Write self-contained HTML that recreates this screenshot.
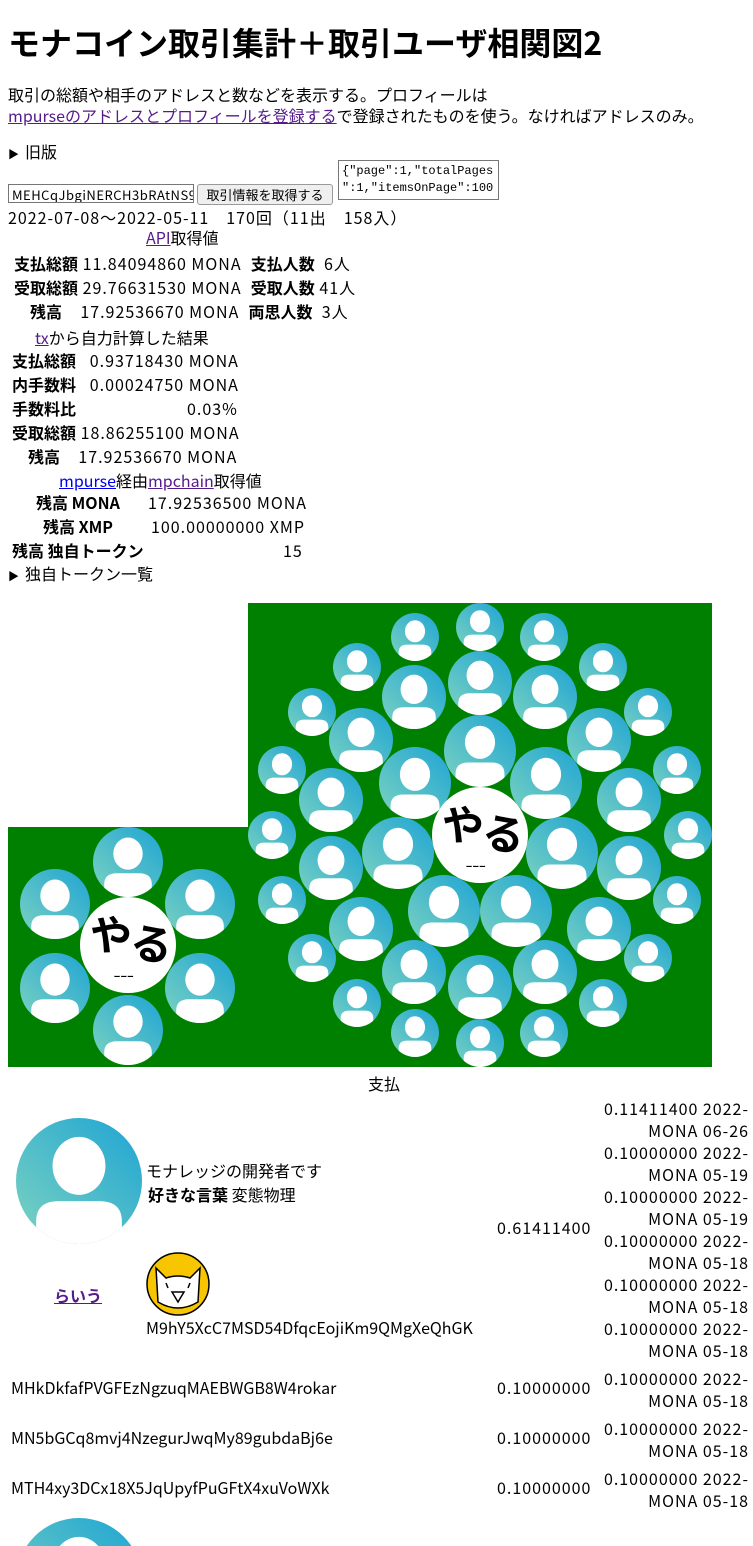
<!DOCTYPE html>
<html><head><meta charset="utf-8"><style>
body{margin:0;width:753px;height:1546px;overflow:hidden;background:#fff;font-family:"Noto Sans CJK JP","Liberation Sans",sans-serif;font-size:16px;color:#000;position:relative}
.a{position:absolute;white-space:nowrap;line-height:20px}
.n{letter-spacing:1px}
b{font-weight:bold;letter-spacing:0}
a{color:#551a8b}
.r{text-align:right}
.t{font-size:11px;display:inline-block;width:17px}
</style></head><body>
<svg width="0" height="0" style="position:absolute"><defs>
<linearGradient id="g" x1="0" y1="1" x2="1" y2="0"><stop offset="0" stop-color="#7dd3c0"/><stop offset="1" stop-color="#1ea4d4"/></linearGradient>
<clipPath id="c"><circle cx="50" cy="50" r="50"/></clipPath>
<symbol id="p" viewBox="0 0 100 100"><circle cx="50" cy="50" r="50" fill="url(#g)"/><g clip-path="url(#c)" fill="#fff"><ellipse cx="50" cy="38" rx="21" ry="23"/><path d="M16 100 V82 Q16 66 34 66 H66 Q84 66 84 82 V100Z"/></g></symbol>
<symbol id="y" viewBox="0 0 100 100"><circle cx="50" cy="50" r="50" fill="#fff"/><text x="8" y="60" font-size="44" font-weight="bold" font-family="Noto Sans CJK JP" transform="rotate(12 50 50)">やる</text><text x="35" y="88" font-size="14">ｰｰｰ</text></symbol>
</defs></svg>

<div class="a" style="left:8px;top:22px;font-size:32px;font-weight:bold;line-height:40px">モナコイン取引集計＋取引ユーザ相関図2</div>
<div class="a" style="left:8px;top:84px">取引の総額や相手のアドレスと数などを表示する。プロフィールは</div>
<div class="a" style="left:8px;top:105px"><a href="#">mpurseのアドレスとプロフィールを登録する</a>で登録されたものを使う。なければアドレスのみ。</div>
<div class="a" style="left:8px;top:141px"><span class="t">▶</span>旧版</div>
<div class="a" style="left:8px;top:184px;height:19px;border:1px solid #767676;font-size:13px;line-height:19px;overflow:hidden;padding-left:3px;box-sizing:border-box;width:186px;letter-spacing:0.5px">MEHCqJbgiNERCH3bRAtNS9</div>
<div class="a" style="left:197px;top:184px;width:136px;height:21px;border:1px solid #999;border-radius:3px;background:#efefef;font-size:13px;line-height:20px;text-align:center;box-sizing:border-box">取引情報を取得する</div>
<div class="a" style="left:338px;top:160px;width:161px;height:40px;border:1px solid #767676;font-family:'Liberation Mono',monospace;font-size:12px;line-height:17px;padding:2px 3px;box-sizing:border-box;overflow:hidden">{"page":1,"totalPages<br>":1,"itemsOnPage":100</div>
<div class="a n" style="left:8px;top:207px">2022-07-08～2022-05-11　170回（11出　158入）</div>
<div class="a" style="left:146px;top:227px"><a href="#">API</a>取得値</div>
<div class="a n" style="left:14px;top:253px"><b>支払総額</b> 11.84094860 MONA &nbsp;<b>支払人数</b> &nbsp;6人</div>
<div class="a n" style="left:14px;top:277px"><b>受取総額</b> 29.76631530 MONA &nbsp;<b>受取人数</b> 41人</div>
<div class="a n" style="left:30px;top:301px"><b>残高</b> &nbsp;&nbsp;&nbsp;17.92536670 MONA &nbsp;<b>両思人数</b> &nbsp;3人</div>
<div class="a" style="left:35px;top:327px"><a href="#">tx</a>から自力計算した結果</div>
<div class="a n" style="left:12px;top:350px"><b>支払総額</b> &nbsp;&nbsp;0.93718430 MONA</div>
<div class="a n" style="left:12px;top:374px"><b>内手数料</b> &nbsp;&nbsp;0.00024750 MONA</div>
<div class="a" style="left:12px;top:398px"><b>手数料比</b></div><div class="a n" style="left:187px;top:398px">0.03%</div>
<div class="a n" style="left:12px;top:422px"><b>受取総額</b> 18.86255100 MONA</div>
<div class="a n" style="left:28px;top:446px"><b>残高</b> &nbsp;&nbsp;&nbsp;17.92536670 MONA</div>
<div class="a" style="left:59px;top:470px"><a href="#" style="color:#00e">mpurse</a>経由<a href="#">mpchain</a>取得値</div>
<div class="a" style="left:36px;top:492px"><b>残高 MONA</b></div><div class="a n" style="left:148px;top:492px">17.92536500 MONA</div>
<div class="a" style="left:43px;top:516px"><b>残高 XMP</b></div><div class="a n" style="left:151px;top:516px">100.00000000 XMP</div>
<div class="a" style="left:12px;top:540px"><b>残高 独自トークン</b></div><div class="a n" style="left:283px;top:540px">15</div>
<div class="a" style="left:8px;top:563px"><span class="t">▶</span>独自トークン一覧</div>

<div style="position:absolute;left:248px;top:603px;width:464px;height:464px;background:#008000"></div>
<div style="position:absolute;left:8px;top:827px;width:240px;height:240px;background:#008000"></div>
<svg width="753" height="1546" style="position:absolute;left:0;top:0">
<g>
<use href="#p" x="391" y="613" width="48" height="48"/><use href="#p" x="456" y="603" width="48" height="48"/><use href="#p" x="520" y="613" width="48" height="48"/>
<use href="#p" x="333" y="643" width="48" height="48"/><use href="#p" x="579" y="643" width="48" height="48"/>
<use href="#p" x="288" y="688" width="48" height="48"/><use href="#p" x="624" y="688" width="48" height="48"/>
<use href="#p" x="258" y="746" width="48" height="48"/><use href="#p" x="653" y="746" width="48" height="48"/>
<use href="#p" x="248" y="811" width="48" height="48"/><use href="#p" x="664" y="811" width="48" height="48"/>
<use href="#p" x="258" y="876" width="48" height="48"/><use href="#p" x="653" y="876" width="48" height="48"/>
<use href="#p" x="288" y="934" width="48" height="48"/><use href="#p" x="624" y="934" width="48" height="48"/>
<use href="#p" x="333" y="979" width="48" height="48"/><use href="#p" x="579" y="979" width="48" height="48"/>
<use href="#p" x="391" y="1009" width="48" height="48"/><use href="#p" x="456" y="1019" width="48" height="48"/><use href="#p" x="520" y="1009" width="48" height="48"/>
<use href="#p" x="382" y="665" width="64" height="64"/><use href="#p" x="448" y="651" width="64" height="64"/><use href="#p" x="513" y="665" width="64" height="64"/>
<use href="#p" x="329" y="708" width="64" height="64"/><use href="#p" x="567" y="708" width="64" height="64"/>
<use href="#p" x="299" y="768" width="64" height="64"/><use href="#p" x="597" y="768" width="64" height="64"/>
<use href="#p" x="299" y="836" width="64" height="64"/><use href="#p" x="597" y="836" width="64" height="64"/>
<use href="#p" x="329" y="897" width="64" height="64"/><use href="#p" x="567" y="897" width="64" height="64"/>
<use href="#p" x="382" y="940" width="64" height="64"/><use href="#p" x="448" y="955" width="64" height="64"/><use href="#p" x="513" y="940" width="64" height="64"/>
<use href="#p" x="444" y="715" width="72" height="72"/>
<use href="#p" x="379" y="747" width="72" height="72"/><use href="#p" x="510" y="747" width="72" height="72"/>
<use href="#p" x="362" y="817" width="72" height="72"/><use href="#p" x="526" y="817" width="72" height="72"/>
<use href="#p" x="408" y="875" width="72" height="72"/><use href="#p" x="480" y="875" width="72" height="72"/>
<use href="#y" x="432" y="787" width="96" height="96"/>
<use href="#p" x="93" y="827" width="70" height="70"/>
<use href="#p" x="20" y="869" width="70" height="70"/><use href="#p" x="165" y="869" width="70" height="70"/>
<use href="#p" x="20" y="953" width="70" height="70"/><use href="#p" x="165" y="953" width="70" height="70"/>
<use href="#p" x="93" y="995" width="70" height="70"/>
<use href="#y" x="80" y="897" width="96" height="96"/>
<use href="#p" x="16" y="1118" width="126" height="126"/>
<use href="#p" x="16" y="1518" width="126" height="126"/>
<ellipse cx="178" cy="1284" rx="31" ry="31" fill="#f7c600" stroke="#000" stroke-width="1.5"/>
<path d="M158 1302 L156 1268 L166 1278 Q178 1274 190 1278 L200 1268 L198 1302 Q178 1314 158 1302Z" fill="#fff" stroke="#000" stroke-width="1.5"/>
<path d="M172 1292 L178 1302 L184 1292Z M168 1288 L166 1283 M188 1288 L190 1283" fill="none" stroke="#000" stroke-width="1.5"/>
</g></svg>

<div class="a" style="left:368px;top:1073px">支払</div>
<div class="a" style="left:146px;top:1160px">モナレッジの開発者です</div>
<div class="a" style="left:148px;top:1184px"><b>好きな言葉</b> 変態物理</div>
<div class="a" style="left:54px;top:1285px"><a href="#"><b>らいう</b></a></div>
<div class="a" style="left:146px;top:1317px">M9hY5XcC7MSD54DfqcEojiKm9QMgXeQhGK</div>
<div class="a n" style="left:497px;top:1217px">0.61411400</div>
<div class="a r n" style="right:4px;top:1097px;line-height:22px">0.11411400 2022-<br>MONA 06-26</div>
<div class="a r n" style="right:4px;top:1141px;line-height:22px">0.10000000 2022-<br>MONA 05-19</div>
<div class="a r n" style="right:4px;top:1185px;line-height:22px">0.10000000 2022-<br>MONA 05-19</div>
<div class="a r n" style="right:4px;top:1229px;line-height:22px">0.10000000 2022-<br>MONA 05-18</div>
<div class="a r n" style="right:4px;top:1273px;line-height:22px">0.10000000 2022-<br>MONA 05-18</div>
<div class="a r n" style="right:4px;top:1317px;line-height:22px">0.10000000 2022-<br>MONA 05-18</div>
<div class="a" style="left:11px;top:1377px">MHkDkfafPVGFEzNgzuqMAEBWGB8W4rokar</div>
<div class="a n" style="left:497px;top:1377px">0.10000000</div>
<div class="a r n" style="right:4px;top:1367px;line-height:22px">0.10000000 2022-<br>MONA 05-18</div>
<div class="a" style="left:11px;top:1427px">MN5bGCq8mvj4NzegurJwqMy89gubdaBj6e</div>
<div class="a n" style="left:497px;top:1427px">0.10000000</div>
<div class="a r n" style="right:4px;top:1417px;line-height:22px">0.10000000 2022-<br>MONA 05-18</div>
<div class="a" style="left:11px;top:1477px">MTH4xy3DCx18X5JqUpyfPuGFtX4xuVoWXk</div>
<div class="a n" style="left:497px;top:1477px">0.10000000</div>
<div class="a r n" style="right:4px;top:1467px;line-height:22px">0.10000000 2022-<br>MONA 05-18</div>
</body></html>
